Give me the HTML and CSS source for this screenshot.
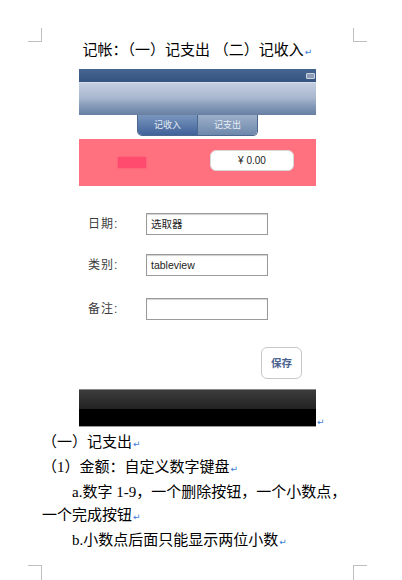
FILE: index.html
```html
<!DOCTYPE html>
<html lang="zh-CN">
<head>
  <meta charset="UTF-8" />
  <meta name="viewport" content="width=device-width, initial-scale=1.0"/>
  <title>记帐</title>
  <link rel="stylesheet" href="styles.css">
</head>
<body>
  <div class="page">
    <div class="marks">
      <span class="mark mark-tl"></span>
      <span class="mark mark-tr"></span>
    </div>

    <div class="doc">
      <p class="title">记帐：（一）记支出 （二）记收入<span class="ret">↵</span></p>

      <div class="figure">
        <div class="phone">
          <div class="status"><span class="battery"></span></div>
          <div class="navbar"></div>
          <div class="seg-wrap">
            <div class="seg">
              <span class="seg-item on">记收入</span>
              <span class="seg-item">记支出</span>
            </div>
          </div>
          <div class="amount">
            <span class="tag"></span>
            <span class="money">¥ 0.00</span>
          </div>
          <div class="form">
            <div class="row"><span class="label">日期:</span><span class="field">选取器</span></div>
            <div class="row"><span class="label">类别:</span><span class="field">tableview</span></div>
            <div class="row row-note"><span class="label">备注:</span><span class="field"></span></div>
            <div class="save-row"><span class="save">保存</span></div>
          </div>
          <div class="toolbar"></div>
        </div>
        <span class="ret">↵</span>
      </div>

      <p>（一）记支出<span class="ret">↵</span></p>
      <p>（1）金额：自定义数字键盘<span class="ret">↵</span></p>
      <p class="indent">a.数字 1-9，一个删除按钮，一个小数点，<br>一个完成按钮<span class="ret">↵</span></p>
      <p class="indent">b.小数点后面只能显示两位小数<span class="ret">↵</span></p>
    </div>

    <div class="marks marks-bottom">
      <span class="mark mark-bl"></span>
      <span class="mark mark-br"></span>
    </div>
  </div>
</body>
</html>
```

FILE: styles.css
```css
body { margin: 0; background: #fff; color: #000; font-family: "Liberation Serif", "Noto Sans CJK SC", serif; font-size: 15px; }
.page { width: 402px; height: 580px; display: flex; flex-direction: column; overflow: hidden; }

/* page corner marks */
.marks { display: flex; justify-content: space-between; padding: 28px 35px 0 28px; }
.marks-bottom { margin-top: auto; padding-top: 0; }
.mark { width: 13px; height: 13px; border: 0 solid #bfbfbf; }
.mark-tl { border-right-width: 1px; border-bottom-width: 1px; }
.mark-tr { border-left-width: 1px; border-bottom-width: 1px; }
.mark-bl { border-right-width: 1px; border-top-width: 1px; height: 14px; }
.mark-br { border-left-width: 1px; border-top-width: 1px; height: 14px; }

.doc { padding: 0 49px 0 42px; }
.doc p { margin: 0; line-height: 23px; white-space: nowrap; }
.doc p.title { line-height: 16px; text-align: center; }
.doc p.indent { text-indent: 30px; }
.ret { color: #3a7bd5; font-family: "DejaVu Sans", sans-serif; font-size: 9px; margin-left: 1px; }

.figure { display: flex; align-items: flex-end; padding-left: 37px; margin: 9px 0 4px; line-height: 10px; }

/* phone mockup */
.phone { width: 237px; height: 358px; display: flex; flex-direction: column; background: #fff; font-family: "Liberation Sans", "Noto Sans CJK SC", sans-serif; }
.status { height: 13px; background: linear-gradient(#466591, #35547f); display: flex; justify-content: flex-end; align-items: center; padding-right: 1px; }
.battery { width: 7px; height: 4px; border: 1px solid #c9d2df; background: #8d9db5; border-radius: 1px; }
.navbar { height: 33px; background: linear-gradient(#c3cee0, #a9b8cf 45%, #8197b6 75%, #687fa2); border-top: 1px solid #d7dfec; box-sizing: border-box; }
.seg-wrap { height: 24px; display: flex; justify-content: center; }
.seg { display: flex; height: 21px; width: 121px; border-radius: 0 0 5px 5px; overflow: hidden; border: 1px solid #4b6891; border-top: 0; box-sizing: border-box; }
.seg-item { flex: 1; display: flex; align-items: center; justify-content: center; font-size: 9px; color: #e6ecf4; background: linear-gradient(#9cafc9, #6e88ac); }
.seg-item.on { background: linear-gradient(#7896bd, #41629a); border-right: 1px solid #4b6891; }

.amount { height: 47px; background: #ff717f; display: flex; align-items: center; }
.tag { width: 28px; height: 11px; margin-left: 39px; background: #ff4b6d; box-shadow: 0 0 2px #ff4b6d; border-radius: 1px; }
.money { width: 84px; height: 21px; margin-left: 64px; margin-bottom: 4px; box-sizing: border-box; background: #fff; border: 1px solid #d7d7d7; border-radius: 6px; font-size: 10px; color: #222; display: flex; align-items: center; justify-content: center; }

.form { padding-top: 27px; display: flex; flex-direction: column; gap: 19px; }
.row { display: flex; align-items: center; padding-left: 9px; }
.row-note { margin-top: 3px; }
.label { width: 58px; font-size: 12px; color: #3c3c3c; letter-spacing: 1px; }
.field { width: 122px; height: 22px; box-sizing: border-box; border: 1px solid #9a9a9a; box-shadow: inset 0 1px 1px #d0d0d0; padding-left: 4px; font-size: 10.5px; color: #222; display: flex; align-items: center; }
.save-row { display: flex; justify-content: flex-end; padding-right: 14px; margin-top: 8px; }
.save { width: 41px; height: 32px; box-sizing: border-box; border: 1px solid #c8c8c8; border-radius: 6px; display: flex; align-items: center; justify-content: center; font-size: 10.5px; font-weight: bold; color: #4b6390; }

.toolbar { margin-top: auto; height: 38px; box-sizing: border-box; border-top: 1px solid #8a8a8a; border-bottom: 1px solid #9a9a9a; background: linear-gradient(#3c3c3c, #232323 52%, #000 53%, #000); }
```
